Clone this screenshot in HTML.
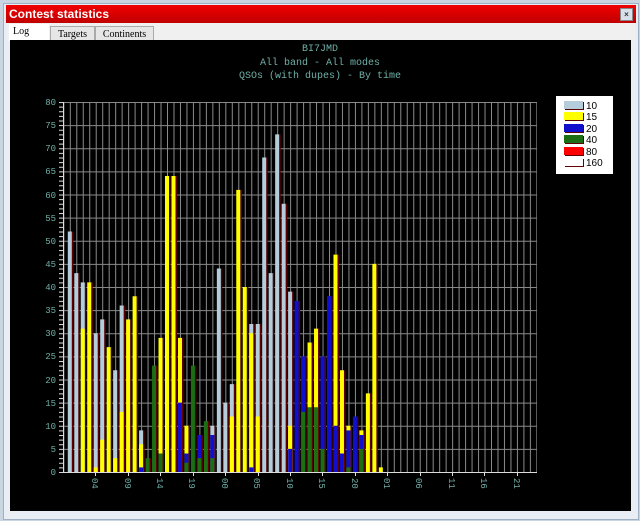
<!DOCTYPE html>
<html><head><meta charset="utf-8"><style>
body{margin:0;width:640px;height:521px;background:#c9d5e1;position:relative;overflow:hidden;font-family:"Liberation Sans",sans-serif}
.win{position:absolute;left:3px;top:3px;width:634px;height:515px;background:#e8eef4;border:1px solid #9fb0c2}
.tb{position:absolute;left:2px;top:1px;width:630px;height:18px;background:linear-gradient(#f00000,#c00000);color:#fff;font-weight:bold;font-size:12px;line-height:18px}
.tb span{margin-left:3px}
.x{position:absolute;right:3px;top:3px;width:11px;height:11px;background:#d8e0ea;border:1px solid #888;font-size:8px;line-height:11px;text-align:center;color:#333}
.tabs{position:absolute;left:3px;top:19px;width:628px;height:18px;background:#f0f0f0}
.t{position:absolute;top:3px;height:15px;font:10px "Liberation Serif",serif;line-height:15px;background:#e6e6e6;border:1px solid #aaa;border-bottom:none;text-align:center}
svg{position:absolute;left:0;top:0}
.a{fill:#b5ccdb}.y{fill:#ffff00}.b{fill:#1010cc}.g{fill:#1c6e14}.s{fill:#5e0000}
text{font-family:"Liberation Mono",monospace;fill:#6fb0a8}
</style></head><body>
<div class="win">
<div class="tb"><span>Contest statistics</span><div class="x">×</div></div>
<div class="tabs">
<div class="t" style="left:2px;top:1px;width:40px;height:17px;background:#fff;border:none;text-align:left;padding-left:4px;width:36px">Log</div>
<div class="t" style="left:43px;width:43px">Targets</div>
<div class="t" style="left:88px;width:57px">Continents</div>
</div>
</div>
<svg width="640" height="521" viewBox="0 0 640 521">
<defs>
<pattern id="vg" x="69.8" y="0" width="6.48" height="10" patternUnits="userSpaceOnUse"><rect x="0" y="0" width="1" height="10" fill="#8a8a8a"/></pattern>
<pattern id="hg" x="0" y="102" width="10" height="23.125" patternUnits="userSpaceOnUse"><rect x="0" y="0" width="10" height="1" fill="#8a8a8a"/></pattern>
<pattern id="mt" x="0" y="102" width="10" height="4.625" patternUnits="userSpaceOnUse"><rect x="0" y="0" width="10" height="1" fill="#ddd"/></pattern>
</defs>
<rect x="10" y="40" width="621" height="471" fill="#000"/>
<text x="320" y="51" text-anchor="middle" font-size="10">BI7JMD</text>
<text x="320" y="65" text-anchor="middle" font-size="10">All band - All modes</text>
<text x="320" y="78" text-anchor="middle" font-size="10">QSOs (with dupes) - By time</text>
<rect x="64" y="102" width="473" height="370" fill="url(#vg)"/>
<rect x="64" y="102" width="473" height="370" fill="url(#hg)"/>
<rect x="59" y="102" width="4" height="371" fill="url(#mt)"/>
<rect x="63" y="102" width="1" height="371" fill="#ddd"/>
<rect x="63" y="472" width="474" height="1" fill="#ddd"/>
<g font-size="9" text-anchor="end">
<text x="56" y="105">80</text><text x="56" y="128">75</text><text x="56" y="151">70</text><text x="56" y="174">65</text><text x="56" y="198">60</text><text x="56" y="221">55</text><text x="56" y="244">50</text><text x="56" y="267">45</text><text x="56" y="290">40</text><text x="56" y="313">35</text><text x="56" y="336">30</text><text x="56" y="359">25</text><text x="56" y="383">20</text><text x="56" y="406">15</text><text x="56" y="429">10</text><text x="56" y="452">5</text><text x="56" y="475">0</text>
</g>
<g font-size="9">
<text transform="translate(92,478) rotate(90)">04</text>
<text transform="translate(125,478) rotate(90)">09</text>
<text transform="translate(157,478) rotate(90)">14</text>
<text transform="translate(189,478) rotate(90)">19</text>
<text transform="translate(222,478) rotate(90)">00</text>
<text transform="translate(254,478) rotate(90)">05</text>
<text transform="translate(287,478) rotate(90)">10</text>
<text transform="translate(319,478) rotate(90)">15</text>
<text transform="translate(352,478) rotate(90)">20</text>
<text transform="translate(384,478) rotate(90)">01</text>
<text transform="translate(416,478) rotate(90)">06</text>
<text transform="translate(449,478) rotate(90)">11</text>
<text transform="translate(481,478) rotate(90)">16</text>
<text transform="translate(514,478) rotate(90)">21</text>
</g>
<g fill="#ddd">
<rect x="95" y="472" width="1" height="4"/><rect x="128" y="472" width="1" height="4"/><rect x="160" y="472" width="1" height="4"/><rect x="193" y="472" width="1" height="4"/><rect x="225" y="472" width="1" height="4"/><rect x="258" y="472" width="1" height="4"/><rect x="290" y="472" width="1" height="4"/><rect x="322" y="472" width="1" height="4"/><rect x="355" y="472" width="1" height="4"/><rect x="387" y="472" width="1" height="4"/><rect x="420" y="472" width="1" height="4"/><rect x="452" y="472" width="1" height="4"/><rect x="484" y="472" width="1" height="4"/><rect x="517" y="472" width="1" height="4"/>
</g>
<g transform="translate(69.8,472) scale(6.48,-4.625)">
<g transform="translate(0,0)"><rect class="s" x=".31" width=".23" height="52"/><rect class="a" x="-.31" width=".62" height="52"/></g>
<g transform="translate(1,0)"><rect class="s" x=".31" width=".23" height="43"/><rect class="a" x="-.31" width=".62" height="43"/></g>
<g transform="translate(2,0)"><rect class="s" x=".31" width=".23" height="41"/><rect class="a" x="-.31" width=".62" height="41"/><rect class="y" x="-.31" width=".62" height="31"/></g>
<g transform="translate(3,0)"><rect class="s" x=".31" width=".23" height="41"/><rect class="y" x="-.31" width=".62" height="41"/></g>
<g transform="translate(4,0)"><rect class="s" x=".31" width=".23" height="30"/><rect class="a" x="-.31" width=".62" height="30"/><rect class="y" x="-.31" width=".62" height="1"/></g>
<g transform="translate(5,0)"><rect class="s" x=".31" width=".23" height="33"/><rect class="a" x="-.31" width=".62" height="33"/><rect class="y" x="-.31" width=".62" height="7"/></g>
<g transform="translate(6,0)"><rect class="s" x=".31" width=".23" height="27"/><rect class="y" x="-.31" width=".62" height="27"/></g>
<g transform="translate(7,0)"><rect class="s" x=".31" width=".23" height="22"/><rect class="a" x="-.31" width=".62" height="22"/><rect class="y" x="-.31" width=".62" height="3"/></g>
<g transform="translate(8,0)"><rect class="s" x=".31" width=".23" height="36"/><rect class="a" x="-.31" width=".62" height="36"/><rect class="y" x="-.31" width=".62" height="13"/></g>
<g transform="translate(9,0)"><rect class="s" x=".31" width=".23" height="33"/><rect class="y" x="-.31" width=".62" height="33"/></g>
<g transform="translate(10,0)"><rect class="s" x=".31" width=".23" height="38"/><rect class="y" x="-.31" width=".62" height="38"/></g>
<g transform="translate(11,0)"><rect class="s" x=".31" width=".23" height="9"/><rect class="a" x="-.31" width=".62" height="9"/><rect class="y" x="-.31" width=".62" height="6"/><rect class="b" x="-.31" width=".62" height="1"/></g>
<g transform="translate(12,0)"><rect class="s" x=".31" width=".23" height="3"/><rect class="g" x="-.31" width=".62" height="3"/></g>
<g transform="translate(13,0)"><rect class="s" x=".31" width=".23" height="23"/><rect class="g" x="-.31" width=".62" height="23"/></g>
<g transform="translate(14,0)"><rect class="s" x=".31" width=".23" height="29"/><rect class="y" x="-.31" width=".62" height="29"/><rect class="g" x="-.31" width=".62" height="4"/></g>
<g transform="translate(15,0)"><rect class="s" x=".31" width=".23" height="64"/><rect class="y" x="-.31" width=".62" height="64"/></g>
<g transform="translate(16,0)"><rect class="s" x=".31" width=".23" height="64"/><rect class="y" x="-.31" width=".62" height="64"/></g>
<g transform="translate(17,0)"><rect class="s" x=".31" width=".23" height="29"/><rect class="y" x="-.31" width=".62" height="29"/><rect class="b" x="-.31" width=".62" height="15"/></g>
<g transform="translate(18,0)"><rect class="s" x=".31" width=".23" height="10"/><rect class="y" x="-.31" width=".62" height="10"/><rect class="b" x="-.31" width=".62" height="4"/><rect class="g" x="-.31" width=".62" height="2"/></g>
<g transform="translate(19,0)"><rect class="s" x=".31" width=".23" height="23"/><rect class="g" x="-.31" width=".62" height="23"/></g>
<g transform="translate(20,0)"><rect class="s" x=".31" width=".23" height="8"/><rect class="b" x="-.31" width=".62" height="8"/><rect class="g" x="-.31" width=".62" height="3"/></g>
<g transform="translate(21,0)"><rect class="s" x=".31" width=".23" height="11"/><rect class="g" x="-.31" width=".62" height="11"/></g>
<g transform="translate(22,0)"><rect class="s" x=".31" width=".23" height="10"/><rect class="a" x="-.31" width=".62" height="10"/><rect class="b" x="-.31" width=".62" height="8"/><rect class="g" x="-.31" width=".62" height="3"/></g>
<g transform="translate(23,0)"><rect class="s" x=".31" width=".23" height="44"/><rect class="a" x="-.31" width=".62" height="44"/></g>
<g transform="translate(24,0)"><rect class="s" x=".31" width=".23" height="15"/><rect class="a" x="-.31" width=".62" height="15"/></g>
<g transform="translate(25,0)"><rect class="s" x=".31" width=".23" height="19"/><rect class="a" x="-.31" width=".62" height="19"/><rect class="y" x="-.31" width=".62" height="12"/></g>
<g transform="translate(26,0)"><rect class="s" x=".31" width=".23" height="61"/><rect class="y" x="-.31" width=".62" height="61"/></g>
<g transform="translate(27,0)"><rect class="s" x=".31" width=".23" height="40"/><rect class="y" x="-.31" width=".62" height="40"/></g>
<g transform="translate(28,0)"><rect class="s" x=".31" width=".23" height="32"/><rect class="a" x="-.31" width=".62" height="32"/><rect class="y" x="-.31" width=".62" height="30"/><rect class="b" x="-.31" width=".62" height="1"/></g>
<g transform="translate(29,0)"><rect class="s" x=".31" width=".23" height="32"/><rect class="a" x="-.31" width=".62" height="32"/><rect class="y" x="-.31" width=".62" height="12"/></g>
<g transform="translate(30,0)"><rect class="s" x=".31" width=".23" height="68"/><rect class="a" x="-.31" width=".62" height="68"/></g>
<g transform="translate(31,0)"><rect class="s" x=".31" width=".23" height="43"/><rect class="a" x="-.31" width=".62" height="43"/></g>
<g transform="translate(32,0)"><rect class="s" x=".31" width=".23" height="73"/><rect class="a" x="-.31" width=".62" height="73"/></g>
<g transform="translate(33,0)"><rect class="s" x=".31" width=".23" height="58"/><rect class="a" x="-.31" width=".62" height="58"/></g>
<g transform="translate(34,0)"><rect class="s" x=".31" width=".23" height="39"/><rect class="a" x="-.31" width=".62" height="39"/><rect class="y" x="-.31" width=".62" height="10"/><rect class="b" x="-.31" width=".62" height="5"/></g>
<g transform="translate(35,0)"><rect class="s" x=".31" width=".23" height="37"/><rect class="b" x="-.31" width=".62" height="37"/></g>
<g transform="translate(36,0)"><rect class="s" x=".31" width=".23" height="25"/><rect class="b" x="-.31" width=".62" height="25"/><rect class="g" x="-.31" width=".62" height="13"/></g>
<g transform="translate(37,0)"><rect class="s" x=".31" width=".23" height="28"/><rect class="y" x="-.31" width=".62" height="28"/><rect class="g" x="-.31" width=".62" height="14"/></g>
<g transform="translate(38,0)"><rect class="s" x=".31" width=".23" height="31"/><rect class="y" x="-.31" width=".62" height="31"/><rect class="g" x="-.31" width=".62" height="14"/></g>
<g transform="translate(39,0)"><rect class="s" x=".31" width=".23" height="25"/><rect class="b" x="-.31" width=".62" height="25"/><rect class="g" x="-.31" width=".62" height="5"/></g>
<g transform="translate(40,0)"><rect class="s" x=".31" width=".23" height="38"/><rect class="b" x="-.31" width=".62" height="38"/></g>
<g transform="translate(41,0)"><rect class="s" x=".31" width=".23" height="47"/><rect class="y" x="-.31" width=".62" height="47"/><rect class="b" x="-.31" width=".62" height="10"/></g>
<g transform="translate(42,0)"><rect class="s" x=".31" width=".23" height="22"/><rect class="y" x="-.31" width=".62" height="22"/><rect class="b" x="-.31" width=".62" height="4"/></g>
<g transform="translate(43,0)"><rect class="s" x=".31" width=".23" height="10"/><rect class="y" x="-.31" width=".62" height="10"/><rect class="b" x="-.31" width=".62" height="9"/><rect class="g" x="-.31" width=".62" height="1"/></g>
<g transform="translate(44,0)"><rect class="s" x=".31" width=".23" height="12"/><rect class="b" x="-.31" width=".62" height="12"/></g>
<g transform="translate(45,0)"><rect class="s" x=".31" width=".23" height="9"/><rect class="y" x="-.31" width=".62" height="9"/><rect class="b" x="-.31" width=".62" height="8"/><rect class="g" x="-.31" width=".62" height="5"/></g>
<g transform="translate(46,0)"><rect class="s" x=".31" width=".23" height="17"/><rect class="y" x="-.31" width=".62" height="17"/></g>
<g transform="translate(47,0)"><rect class="s" x=".31" width=".23" height="45"/><rect class="y" x="-.31" width=".62" height="45"/></g>
<g transform="translate(48,0)"><rect class="y" x="-.31" width=".62" height="1"/></g>
</g>
<rect x="556" y="96" width="57" height="78" fill="#fff"/>
<g>
<rect x="565" y="102" width="19" height="8" fill="#5e0000"/><rect x="564" y="101" width="19" height="8" fill="#b5ccdb"/>
<rect x="565" y="113" width="19" height="8" fill="#5e0000"/><rect x="564" y="112" width="19" height="8" fill="#ffff00"/>
<rect x="565" y="125" width="19" height="8" fill="#5e0000"/><rect x="564" y="124" width="19" height="8" fill="#1010cc"/>
<rect x="565" y="136" width="19" height="8" fill="#5e0000"/><rect x="564" y="135" width="19" height="8" fill="#1c6e14"/>
<rect x="565" y="148" width="19" height="8" fill="#5e0000"/><rect x="564" y="147" width="19" height="8" fill="#ff0000"/>
<rect x="565" y="159" width="19" height="8" fill="#5e0000"/><rect x="564" y="158" width="19" height="8" fill="#fff"/>
</g>
<g font-family="Liberation Sans,sans-serif" font-size="10" style="fill:#000">
<text x="586" y="109" style="font-family:'Liberation Sans';fill:#000">10</text>
<text x="586" y="120" style="font-family:'Liberation Sans';fill:#000">15</text>
<text x="586" y="132" style="font-family:'Liberation Sans';fill:#000">20</text>
<text x="586" y="143" style="font-family:'Liberation Sans';fill:#000">40</text>
<text x="586" y="155" style="font-family:'Liberation Sans';fill:#000">80</text>
<text x="586" y="166" style="font-family:'Liberation Sans';fill:#000">160</text>
</g>
</svg>
</body></html>
